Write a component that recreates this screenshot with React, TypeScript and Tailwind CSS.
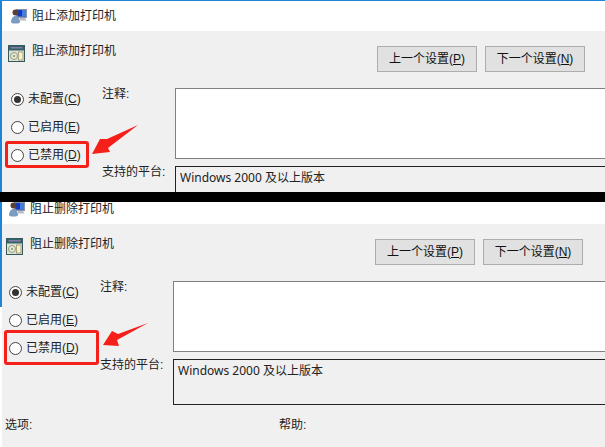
import type { ReactNode } from "react";

const font = "[font-family:'Liberation_Sans','Noto_Sans_CJK_SC',sans-serif]";

function TitleIcon() {
  return (
    <svg width="18" height="18" viewBox="0 0 18 18" className="shrink-0">
      <rect x="6" y="2" width="11" height="9" fill="#8a94a6" />
      <rect x="7.5" y="3" width="8.5" height="6.5" fill="#1238c8" />
      <rect x="12" y="3" width="4" height="6.5" fill="#3f7fe0" />
      <path d="M10 11h5l1.5 2.5h-6.5z" fill="#b8bcc4" />
      <circle cx="5.5" cy="5.5" r="3" fill="#5a4034" />
      <path d="M1 15.5c0-4 2-6.5 4.5-6.5s4.5 2.500 4.500 6.500l-2 1h-5z" fill="#7a9cc0" />
    </svg>
  );
}

function SettingIcon() {
  return (
    <svg width="17" height="17" viewBox="0 0 17 17" className="shrink-0">
      <rect x="0.500" y="0.500" width="16" height="16" fill="#dfe3d6" stroke="#35595c" />
      <rect x="1" y="1" width="15" height="4.500" fill="#2f6468" />
      <rect x="2.500" y="2" width="12" height="1.500" fill="#8d79a8" />
      <circle cx="6" cy="11" r="3.500" fill="#e6e6d6" stroke="#9a9a80" />
      <circle cx="6" cy="11" r="1" fill="#70a060" />
      <rect x="10.500" y="7" width="4.500" height="8" fill="#f6f0c8" stroke="#807a50" strokeWidth="0.600" />
    </svg>
  );
}

function Radio({ label, k, checked }: { label: string; k: string; checked?: boolean }) {
  return (
    <div className="flex h-[14px] items-center gap-[4px] text-[12px] leading-none text-[#222]">
      <span className="flex h-[13px] w-[13px] shrink-0 items-center justify-center rounded-full border border-[#444] bg-white">
        {checked && <span className="h-[7px] w-[7px] rounded-full bg-[#333]" />}
      </span>
      <span>
        {label}(<span className="underline">{k}</span>)
      </span>
    </div>
  );
}

function Btn({ label, k }: { label: string; k: string }) {
  return (
    <div className="flex h-[26px] w-[100px] items-center justify-center border border-[#adadad] bg-[#e1e1e1] text-[12px] text-[#111]">
      <span>
        {label}(<span className="underline">{k}</span>)
      </span>
    </div>
  );
}

function Policy({
  title,
  annotation,
  sectionClass,
  titleClass,
  bodyClass,
  buttonsClass,
  platformClass,
  children,
}: {
  title: string;
  annotation: ReactNode;
  sectionClass: string;
  titleClass: string;
  bodyClass: string;
  buttonsClass: string;
  platformClass: string;
  children?: ReactNode;
}) {
  return (
    <section className={`relative bg-[#f0f0f0] ${sectionClass}`}>
      <div className={`flex items-center gap-[4px] overflow-hidden bg-white ${titleClass}`}>
        <TitleIcon />
        <span className="text-[12px] leading-none text-[#222]">{title}</span>
      </div>
      <div className={`flex flex-col pt-[15px] ${bodyClass}`}>
        <div className="flex h-[42px] justify-between">
          <div className="-mt-px flex items-start gap-[7px]">
            <SettingIcon />
            <span className="text-[12px] leading-[12px] text-[#222]">{title}</span>
          </div>
          <div className={`flex gap-[8px] ${buttonsClass}`}>
            <Btn label="上一个设置" k="P" />
            <Btn label="下一个设置" k="N" />
          </div>
        </div>
        <div className="flex">
          <div className="flex w-[94px] flex-col gap-[14px] pl-[3px] pt-[4px]">
            <Radio label="未配置" k="C" checked />
            <Radio label="已启用" k="E" />
            <Radio label="已禁用" k="D" />
          </div>
          <div className="w-[73px] text-[12px] text-[#222]">
            <div className="h-[77px] leading-[12px]">注释:</div>
            <div className="leading-[14px]">支持的平台:</div>
          </div>
          <div className="flex flex-1 flex-col gap-[7px]">
            <div className="h-[71px] border border-r-0 border-[#808080] bg-white" />
            <div className={`border border-r-0 border-[#222] bg-[#f0f0f0] px-[4px] py-[3px] [font-family:'Noto_Sans','Noto_Sans_CJK_SC',sans-serif] text-[12px] leading-[16px] text-[#222] ${platformClass}`}>
              Windows 2000 及以上版本
            </div>
          </div>
        </div>
        {children}
      </div>
      {annotation}
    </section>
  );
}

export default function App() {
  return (
    <div className={`h-[447px] w-[605px] overflow-hidden bg-white ${font}`}>
      <div className="h-px bg-[#1d85d8]" />
      <div className="h-[191px] overflow-hidden">
        <Policy
          title="阻止添加打印机"
          sectionClass="h-[191px] border-l-2 border-l-[#1d85d8]"
          titleClass="h-[30px] pl-[8px]"
          bodyClass="pl-[6px]"
          buttonsClass="pr-[20px]"
          platformClass="h-[40px]"
          annotation={
            <>
              <div className="absolute left-[3px] top-[140px] h-[27px] w-[84px] rounded-[3px] border-[3px] border-[#f5201a]" />
              <svg className="absolute left-[88px] top-[123px]" width="50" height="32" viewBox="0 0 50 32">
                <path d="M2 30 L10 15 L17 15 L48 1 L18 24 L20 28 Z" fill="#f5201a" />
              </svg>
            </>
          }
        />
      </div>
      <div className="h-[10px] bg-black" />
      <Policy
        title="阻止删除打印机"
        sectionClass="h-[245px] border-l-2 border-l-white"
        titleClass="h-[22px] pb-[8px] pl-[6px]"
        bodyClass="pl-[4px]"
        buttonsClass="pr-[22px]"
        platformClass="h-[46px]"
        annotation={
          <>
            <div className="absolute -left-[2px] top-0 h-[105px] w-[2px] bg-[#1d85d8]" />
            <div className="absolute left-[2px] top-[128px] h-[35px] w-[95px] rounded-[3px] border-[3px] border-[#f5201a]" />
            <svg className="absolute left-[100px] top-[121px]" width="48" height="26" viewBox="0 0 48 26">
              <path d="M1 22 L10 8 L16 11 L46 0 L15 17 L17 23 Z" fill="#f5201a" />
            </svg>
          </>
        }
      >
        <div className="-ml-px mt-[13px] flex text-[12px] leading-[14px] text-[#222]">
          <span className="w-[274px]">选项:</span>
          <span>帮助:</span>
        </div>
      </Policy>
    </div>
  );
}
